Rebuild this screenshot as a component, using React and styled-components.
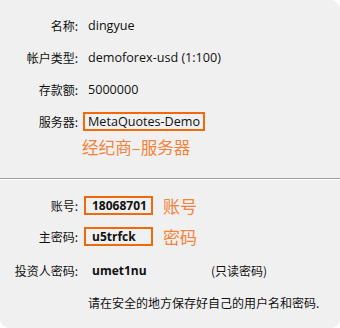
import React from "react";
import styled, { createGlobalStyle } from "styled-components";

const Global = createGlobalStyle`
  html, body { margin: 0; padding: 0; background: #ffffff; }
  body { font-family: "Open Sans", "Noto Sans CJK SC", sans-serif; }
`;

const Panel = styled.div`
  width: 340px;
  height: 328px;
  box-sizing: border-box;
  background: #f0f0f0;
  border-radius: 0 9px 9px 9px;
  color: #111;
  font-size: 12px;
  overflow: hidden;
`;

const Section = styled.div`
  display: flex;
  flex-direction: column;
  padding-top: ${(p) => p.$top}px;
`;

const Row = styled.div`
  display: grid;
  grid-template-columns: 78px 1fr;
  column-gap: 6px;
  align-items: center;
  height: ${(p) => p.$h || 32}px;
  margin-top: ${(p) => p.$mt || 0}px;
`;

const Label = styled.span`
  text-align: right;
  white-space: nowrap;
  font-family: "Noto Sans CJK SC", sans-serif;
`;

const Cell = styled.div`
  display: flex;
  align-items: center;
  white-space: nowrap;
`;

const Value = styled.span`
  padding-left: 4px;
  font-size: 12.6px;
`;

const ServerBox = styled.span`
  margin-left: -1px;
  border: 2px solid #f06a0c;
  height: 15px;
  line-height: 15px;
  padding: 0 3px 0 3px;
  font-size: 12.6px;
`;

const CredBox = styled.span`
  box-sizing: border-box;
  width: 69px;
  height: 19px;
  line-height: 15px;
  border: 2px solid ${(p) => (p.$plain ? "transparent" : "#f06a0c")};
  padding-left: 6px;
  font-weight: 700;
`;

const Tag = styled.span`
  color: #f5823a;
  font-family: "Noto Sans CJK SC", sans-serif;
  font-size: 17px;
  line-height: 22px;
  margin-left: 10px;
`;

const Hint = styled(Tag)`
  margin-left: -2px;
  font-size: 16.6px;
`;

const ReadOnly = styled.span`
  margin-left: 58px;
  font-family: "Noto Sans CJK SC", sans-serif;
`;

const Note = styled.span`
  padding-left: 4px;
  font-family: "Noto Sans CJK SC", sans-serif;
`;

const Divider = styled.div`
  margin-top: 20px;
  height: 0;
  border-top: 1px solid #a0a0a0;
  border-bottom: 1px solid #ffffff;
`;

export default function App() {
  return (
    <>
      <Global />
      <Panel>
        <Section $top={9}>
          <Row>
            <Label>名称:</Label>
            <Cell><Value>dingyue</Value></Cell>
          </Row>
          <Row>
            <Label>帐户类型:</Label>
            <Cell><Value>demoforex-usd (1:100)</Value></Cell>
          </Row>
          <Row>
            <Label>存款额:</Label>
            <Cell><Value>5000000</Value></Cell>
          </Row>
          <Row>
            <Label>服务器:</Label>
            <Cell><ServerBox>MetaQuotes-Demo</ServerBox></Cell>
          </Row>
          <Row $h={22} $mt={-1}>
            <span />
            <Cell><Hint>经纪商–服务器</Hint></Cell>
          </Row>
        </Section>
        <Divider />
        <Section $top={10}>
          <Row $h={31}>
            <Label>账号:</Label>
            <Cell>
              <CredBox>18068701</CredBox>
              <Tag>账号</Tag>
            </Cell>
          </Row>
          <Row $h={31}>
            <Label>主密码:</Label>
            <Cell>
              <CredBox>u5trfck</CredBox>
              <Tag>密码</Tag>
            </Cell>
          </Row>
          <Row $h={31} $mt={3}>
            <Label>投资人密码:</Label>
            <Cell>
              <CredBox $plain>umet1nu</CredBox>
              <ReadOnly>(只读密码)</ReadOnly>
            </Cell>
          </Row>
          <Row $h={32}>
            <span />
            <Cell><Note>请在安全的地方保存好自己的用户名和密码.</Note></Cell>
          </Row>
        </Section>
      </Panel>
    </>
  );
}
